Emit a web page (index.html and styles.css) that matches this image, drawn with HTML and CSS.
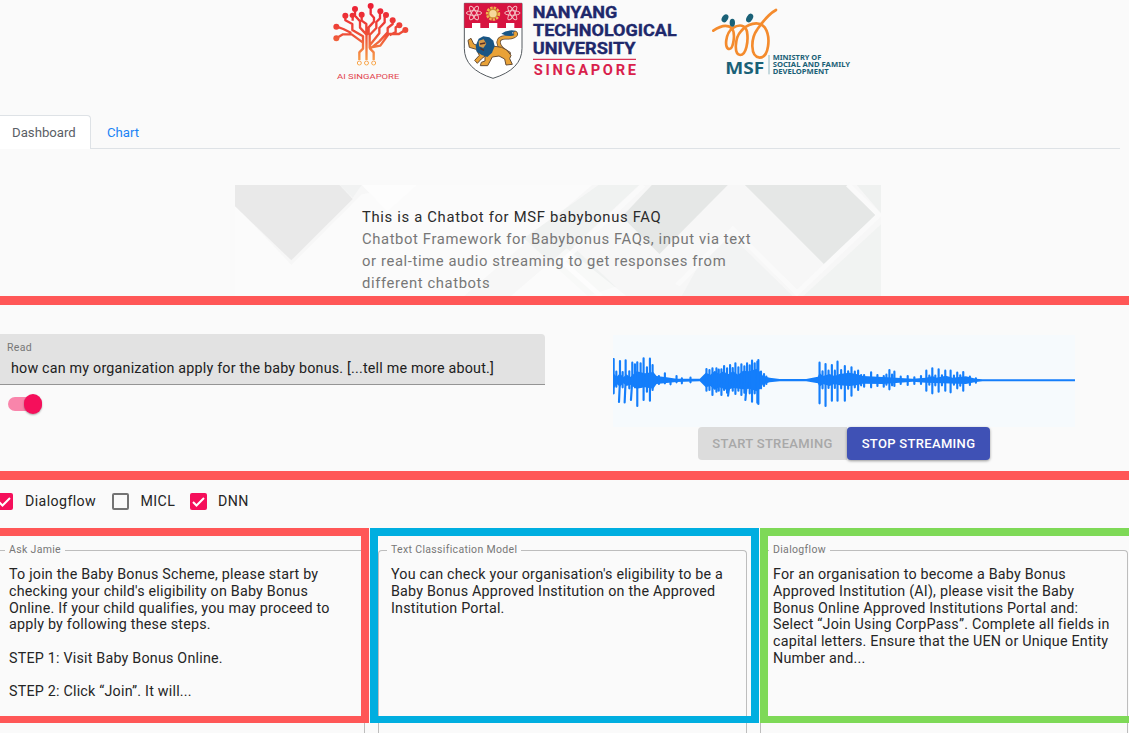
FILE: index.html
```html
<!DOCTYPE html>
<html lang="en">
<head>
<meta charset="utf-8">
<title>Chatbot Dashboard</title>
<link rel="stylesheet" href="styles.css">
</head>
<body>
<header class="logos">
  <svg class="logo-ai" viewBox="0 0 285 255">
    <defs><linearGradient id="ember" gradientUnits="userSpaceOnUse" x1="0" y1="10" x2="0" y2="200"><stop offset="0" stop-color="#ec1c35"/><stop offset=".5" stop-color="#ee5038"/><stop offset="1" stop-color="#f9b04c"/></linearGradient></defs>
    <g fill="none" stroke="url(#ember)" stroke-width="7" stroke-linejoin="round">
      <path d="M124.5 180V104L105 83V64L90 47V30M137 20V42L147 53V65L131 82V98L124 106M103 180V157L114 146V109L82 90V72L61 61V46M83 47V62M35 80L55 87L79 99M34 115L54 103H80L113 127M146 180V157L135 146V135L163 100V84L179 67V47M165 35V55L154 66V84L134 105V145M203 62V72L188 84V97L163 124L137 145M223 76L212 82V96L194 106M240 90L222 102H191L166 137L139 142M110 44V62L124 72V103"/>
      <circle cx="103" cy="189" r="6" stroke-width="3"/><circle cx="124.500" cy="189" r="6" stroke-width="3"/><circle cx="146" cy="189" r="6" stroke-width="3"/>
    </g>
    <g fill="url(#ember)"><circle cx="137" cy="18" r="9"/><circle cx="90" cy="27" r="9"/><circle cx="61" cy="47" r="9"/><circle cx="82" cy="46" r="8"/><circle cx="110" cy="44" r="9"/><circle cx="166" cy="34" r="9"/><circle cx="183" cy="45" r="9"/><circle cx="203" cy="61" r="9"/><circle cx="223" cy="76" r="9"/><circle cx="241" cy="90" r="9"/><circle cx="34" cy="80" r="9"/><circle cx="34" cy="115" r="9"/></g>
    <text x="36" y="236" textLength="187" lengthAdjust="spacingAndGlyphs" font-size="20" fill="#e2444e">AI SINGAPORE</text>
  </svg>
  <svg class="logo-ntu" viewBox="0 0 690 255">
    <path d="M28 10H201V145Q201 208 114 235Q28 208 28 145Z" fill="#fff" stroke="#555b60" stroke-width="3"/>
    <path d="M28 10H201V84H178V69H153V84H127V69H102V84H76V69H51V84H28Z" fill="#d71440"/>
    <g fill="none" stroke="#f3c3c5" stroke-width="3">
      <ellipse cx="57" cy="39" rx="23" ry="7"/><ellipse cx="57" cy="39" rx="23" ry="7" transform="rotate(60 57 39)"/><ellipse cx="57" cy="39" rx="23" ry="7" transform="rotate(120 57 39)"/>
      <ellipse cx="172" cy="39" rx="23" ry="7"/><ellipse cx="172" cy="39" rx="23" ry="7" transform="rotate(60 172 39)"/><ellipse cx="172" cy="39" rx="23" ry="7" transform="rotate(120 172 39)"/>
    </g>
    <circle cx="114" cy="41" r="17" fill="none" stroke="#f0b54d" stroke-width="9" stroke-dasharray="7 3"/><circle cx="114" cy="41" r="13" fill="#f6d89b" stroke="#c98f2e" stroke-width="4"/>
    <g fill="none" stroke-linecap="round" stroke-linejoin="round">
      <path stroke="#664d35" stroke-width="13" d="M161 160C120 138 125 112 150 112C170 114 188 106 181 99"/>
      <path stroke="#e9a237" stroke-width="8" d="M161 160C120 138 125 112 150 112C170 114 188 106 181 99"/>
    </g>
    <path fill="#e9a237" stroke="#664d35" stroke-width="3" stroke-linejoin="round" d="M112 138L140 142L155 150L168 166L164 176L172 193L153 195L149 177L132 168L112 171L98 197H76L79 187L90 183V168L79 177L67 190L59 181L73 166L64 148L43 142L39 121L48 115L56 132L72 138Z"/>
    <path d="M71 116L85 109L103 112L115 122L119 139L111 158L97 171L80 165L65 155L62 137Z" fill="#195584"/>
    <path d="M71 122L86 118L94 131L85 144L72 139Z" fill="#d59a48"/><path d="M75 132L91 129M76 145L87 151" stroke="#542e28" stroke-width="4"/>
    <path d="M139 101Q155 88 182 92L171 98L178 106Q160 111 139 101Z" fill="#195584"/>
    <g font-size="47.500" fill="#20286b" stroke="#20286b" stroke-width="1" font-weight="700"><text x="233" y="54" textLength="254" lengthAdjust="spacingAndGlyphs">NANYANG</text><text x="234" y="109" textLength="431" lengthAdjust="spacingAndGlyphs">TECHNOLOGICAL</text><text x="233" y="162" textLength="309" lengthAdjust="spacingAndGlyphs">UNIVERSITY</text></g>
    <path d="M234 178H543" stroke="#db3154" stroke-width="4"/>
    <text x="236" y="225" textLength="307" font-size="44" fill="#d91f4c" font-weight="700">SINGAPORE</text>
  </svg>
  <svg class="logo-msf" viewBox="0 0 480 255">
    <path fill="none" stroke="#f48b2d" stroke-width="8" stroke-linecap="round" d="M40 92Q75 68 95 84C108 100 100 146 88 147C72 147 76 100 98 84C118 72 136 74 141 95C146 125 138 165 121 165C100 163 106 112 122 95C140 72 175 60 194 82C214 112 206 173 179 173C150 170 152 115 172 88C190 62 210 40 228 30"/>
    <g fill="#1a6177"><ellipse cx="75" cy="55" rx="9" ry="13" transform="rotate(30 75 55)"/><ellipse cx="97" cy="68" rx="8" ry="12"/><ellipse cx="149" cy="54" rx="9" ry="14" transform="rotate(30 149 54)"/></g>
    <g class="msf-name" fill="#1a6177" font-weight="700"><text x="76" y="221" font-size="46" textLength="117" lengthAdjust="spacingAndGlyphs">MSF</text><g font-size="20"><text x="218" y="179" textLength="146" lengthAdjust="spacingAndGlyphs">MINISTRY OF</text><text x="218" y="200" textLength="232" lengthAdjust="spacingAndGlyphs">SOCIAL AND FAMILY</text><text x="218" y="221" textLength="168" lengthAdjust="spacingAndGlyphs">DEVELOPMENT</text></g></g>
    <path d="M207 165V223" stroke="#5b98a8" stroke-width="2"/>
  </svg>
</header>

<nav class="tabs"><a class="tab active">Dashboard</a><a class="tab">Chart</a></nav>

<section class="hero">
  <svg class="hero-art" viewBox="23 30 1514 333" preserveAspectRatio="none">
    <path fill="#f7f7f7" d="M23 30H1537V363H23Z"/>
    <path fill="#fbfbfb" d="M23 90L155 270L320 58L450 30H860L560 363H23Z"/>
    <path fill="#e9e9e9" d="M23 30H268L299 72L155 256L23 94Z"/>
    <path fill="#f1f2f2" d="M268 30H320L299 68Z"/>
    <path fill="#fdfdfd" d="M320 30H450L380 110Z"/>
    <path fill="#f0f2f1" d="M875 30H970L815 215L915 335L850 363L700 190Z"/>
    <path fill="#e5e7e6" d="M1000 30H1178L1018 237L930 125Z"/>
    <path fill="#e5e7e6" d="M1218 30H1456L1524 120L1407 272Z"/>
    <path fill="#eff1f0" d="M1480 30H1537V115Z"/>
    <path fill="#f1f3f2" d="M1537 148V363H1355Z"/>
    <path fill="#f2f3f3" d="M1180 175L1330 363H1070L1110 270Z"/>
    <path fill="none" stroke="#fafafa" stroke-width="13" d="M1460 30L1532 120L1340 354L1190 163L1060 330M980 30L790 260L880 363"/>
    <path fill="#fff" fill-opacity=".5" d="M800 220L940 363H670Z"/>
  </svg>
  <div class="hero-copy"><h1>This is a Chatbot for MSF babybonus FAQ</h1><p>Chatbot Framework for Babybonus FAQs, input via text</p><p>or real-time audio streaming to get responses from</p><p>different chatbots</p></div>
</section>

<section class="input-band">
  <div class="read-column">
    <div class="read-field"><label>Read</label><span>how can my organization apply for the baby bonus. [...tell me more about.]</span></div>
    <div class="switch"><i></i></div>
  </div>
  <div class="stream-column">
    <svg class="wave" viewBox="39 15 1389 276" preserveAspectRatio="none">
      <path fill="#147efb" d="M39 128L50 140L60 130L70 142L80 133L90 142L110 124L135 130L160 126L170 138L200 142L230 146L300 146L318 128L332 134L345 122L358 132L373 122L382 134L400 124L415 134L430 122L450 124L470 116L482 126L490 138L510 143L540 147H620L655 140L660 128L670 138L690 132L705 138L720 132L750 128L770 132L790 138L850 141L890 143L940 146L980 143L1000 138L1010 143L1040 137L1060 143L1100 139L1130 146L1150 148H1428V154H1150L1130 156L1100 162L980 158L940 155L890 159L850 162L790 161L770 166L750 168L720 166L705 162L690 168L670 162L660 170L655 160L620 154H540L510 157L490 163L482 176L470 184L450 176L430 178L400 174L382 180L358 172L345 180L332 168L318 172L300 154L230 156L200 159L170 162L160 176L135 172L110 176L90 164L80 168L70 160L60 170L50 162L39 180Z"/>
      <path fill="none" stroke="#147efb" stroke-width="6.500" stroke-linecap="round" d="M41 87V190M49 125V170M60 93V150L57 216M68 126V172M77 91V150L74 217M88 124V175M97 98V150L93 210M105 103V172M112 97V228M122 100V170M131 85V210M141 112V185M150 86V212M158 105V180M177 138V162M195 130V160M212 150V163M230 138V157M246 145V160M272 143V157M320 117V182M329 120V180M338 115V195M350 115V185M357 119V182M365 118V195M373 108V180M382 115V188M391 105V150L385 197M399 114V182M407 100V192M416 112V182M425 103V195M434 109V188M442 100V150L437 210M450 106V190M457 92V215M465 100V190M473 95V218M476 90V222M484 125V175M493 132V168M500 140V162M660 98V220M669 124V175M678 102V228M687 122V174M697 105V212M706 122V174M714 95V212M725 120V175M736 108V212M746 124V176M756 112V197M766 125V172M776 122V180M785 135V166M794 135V170M815 127V172M834 135V168M853 138V170M861 134V164M870 120V178M878 134V166M885 125V168M904 140V162M925 138V165M945 142V162M965 138V162M981 122V182M990 137V164M999 115V190M1008 137V166M1018 118V185M1028 136V166M1038 122V182M1054 122V187M1064 137V164M1074 128V175M1083 136V167M1092 126V182M1112 140V165M1130 145V158"/>
    </svg>
    <div class="buttons"><button class="start" disabled>START STREAMING</button><button class="stop">STOP STREAMING</button></div>
  </div>
</section>

<section class="checks">
  <span class="box checked"><svg viewBox="0 0 17 17"><path d="M3 9L6.500 12.500L14 5"/></svg></span><span class="check-label c1">Dialogflow</span>
  <span class="box"></span><span class="check-label c2">MICL</span>
  <span class="box checked"><svg viewBox="0 0 17 17"><path d="M3 9L6.500 12.500L14 5"/></svg></span><span class="check-label">DNN</span>
</section>

<main class="answers">
  <article class="answer"><div class="outline"><span class="legend">Ask Jamie</span>
    <p>To join the Baby Bonus Scheme, please start by<br>checking your child's eligibility on Baby Bonus<br>Online. If your child qualifies, you may proceed to<br>apply by following these steps.<br><br>STEP 1: Visit Baby Bonus Online.<br><br>STEP 2: Click “Join”. It will...</p></div><div class="frame red"></div></article>
  <article class="answer"><div class="outline"><span class="legend">Text Classification Model</span>
    <p>You can check your organisation's eligibility to be a<br>Baby Bonus Approved Institution on the Approved<br>Institution Portal.</p></div><div class="frame blue"></div></article>
  <article class="answer"><div class="outline"><span class="legend">Dialogflow</span>
    <p>For an organisation to become a Baby Bonus<br>Approved Institution (AI), please visit the Baby<br>Bonus Online Approved Institutions Portal and:<br>Select “Join Using CorpPass”. Complete all fields in<br>capital letters. Ensure that the UEN or Unique Entity<br>Number and...</p></div><div class="frame green"></div></article>
</main>
</body>
</html>
```

FILE: styles.css
```css
* { box-sizing: border-box; }
body { margin: 0; width: 1129px; height: 733px; overflow: hidden; background: #fafafa; color: #252525; font-family: Roboto, "Liberation Sans", sans-serif; font-size: 14px; }
h1, p { margin: 0; }

.logos { display: flex; height: 115px; padding-left: 325px; }
.logos svg { height: 85px; flex: none; }
.logo-ai { width: 95px; }
.logo-ntu { width: 230px; margin-left: 35px; }
.logo-msf { width: 160px; margin-left: 15px; }
.msf-name { font-family: "Noto Sans", sans-serif; }

.tabs { display: flex; height: 34px; width: 1120px; border-bottom: 1px solid #dee2e6; }
.tab { height: 34px; padding: 9px 16px 0; line-height: 17px; font-size: 13.2px; color: #1b83f5; }
.tab.active { width: 91px; padding: 8px 0 0 12px; color: #5a6066; background: #fff; border: 1px solid #dee2e6; border-left: 0; border-bottom: 0; border-radius: 0 4px 0 0; }

.hero { display: grid; width: 646px; height: 111px; margin: 36px 0 0 235px; }
.hero > * { grid-area: 1 / 1; }
.hero-art { width: 646px; height: 111px; }
.hero-copy { height: 111px; padding: 20.5px 0 0 127px; white-space: nowrap; line-height: 22.2px; font-size: 14.8px; z-index: 1; }
.hero-copy h1 { font-size: 14.8px; font-weight: 400; line-height: 22.2px; letter-spacing: .68px; color: #2b2b2b; }
.hero-copy p { color: #777; letter-spacing: .61px; }

.input-band { display: flex; height: 184px; border: solid #ff5757; border-width: 9px 0; }
.read-column { width: 613px; padding-top: 29px; }
.read-field { display: flex; flex-direction: column; width: 545px; height: 51px; padding: 7px 0 0 7px; background: #e2e2e2; border-bottom: 1px solid #949494; border-radius: 0 4px 0 0; white-space: nowrap; }
.read-field label { font-size: 10.5px; line-height: 14px; color: #777; letter-spacing: .3px; }
.read-field span { padding: 5px 0 0 4px; font-size: 14.3px; line-height: 17px; letter-spacing: .2px; color: #202020; }
.switch { display: flex; justify-content: flex-end; align-items: center; width: 34px; height: 14px; margin: 12px 0 0 7.5px; border-radius: 7px; background: #f985ab; }
.switch i { width: 18px; height: 20px; flex: none; border-radius: 9px; background: #f50f5b; box-shadow: 0 1px 2px #0005; }
.stream-column { padding-top: 30px; }
.wave { display: block; width: 462px; height: 92px; background: #f6fafd; }
.buttons { display: flex; padding-left: 85px; }
button { height: 33px; padding: 0; border: 0; font: 500 13px/33px Roboto, sans-serif; letter-spacing: .32px; white-space: nowrap; }
.start { width: 149px; color: #a8a8a8; background: #dcdcdc; border-radius: 4px 0 0 4px; }
.stop { width: 143px; color: #fff; background: #3f51b5; border-radius: 4px; box-shadow: 0 1px 3px #0006; }

.checks { display: flex; align-items: center; height: 42px; margin-left: -4px; }
.box { width: 17px; height: 17px; flex: none; border: 2px solid #737373; border-radius: 2px; }
.box.checked { border: 0; background: #f50f5b; }
.box svg { display: block; width: 17px; height: 17px; fill: none; stroke: #fff; stroke-width: 2; }
.check-label { padding-left: 12px; font-size: 14.2px; letter-spacing: .4px; }
.c1 { width: 98.5px; }
.c2 { width: 61.5px; }
.c2 ~ .check-label { padding-left: 11px; }

.answers { display: grid; grid-template-columns: 369px 369px 368px; gap: 13px; height: 205px; margin: 6px 0 0 -4px; }
.answer { position: relative; padding-top: 22px; }
.outline { height: 183px; padding: 0 0 0 12px; border: 1px solid #bdbdbd; border-bottom: 0; border-radius: 4px 4px 0 0; white-space: nowrap; }
.legend { display: block; width: max-content; height: 14px; margin: -8px 0 9px -4px; padding: 0 4px; background: #fafafa; color: #777; font-size: 10.5px; line-height: 14px; letter-spacing: .33px; }
.outline p { padding-top: .4px; font-size: 14.3px; line-height: 16.65px; letter-spacing: .21px; }
.frame { position: absolute; top: 0; height: 195px; border: 8px solid; border-bottom-width: 7px; }
.red { left: -10px; width: 383px; border-color: #ff5757; }
.blue { left: -8px; width: 389px; border-color: #00aee0; }
.green { left: 0; width: 389px; border-color: #7ed957; }
```
